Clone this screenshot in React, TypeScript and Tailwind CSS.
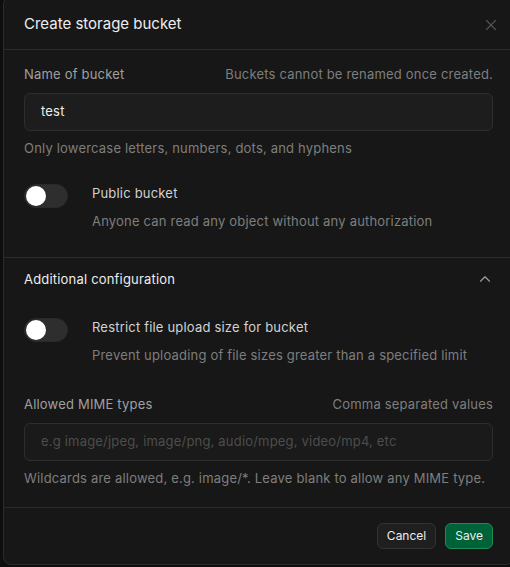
import React from "react";
import { ChevronUp, X } from "lucide-react";

function Switch() {
  return (
    <div className="relative h-[24px] w-[44px] shrink-0 rounded-full border border-[#2a2a2a] bg-[#2e2e2e]">
      <div className="absolute left-[1px] top-[1px] h-[20px] w-[20px] rounded-full bg-white" />
    </div>
  );
}

export default function App() {
  return (
    <div
      className="h-[567px] w-[510px] overflow-hidden bg-[#0e0e0e] tracking-[0.012em]"
      style={{ fontFamily: "Inter, 'Noto Sans', sans-serif" }}
    >
      <div className="-mt-[4px] ml-[3px] flex h-[569px] w-[511px] flex-col rounded-lg border border-[#2b2b2b] bg-[#171717]">
        {/* Header */}
        <div className="flex h-[53px] items-center justify-between border-b border-[#2b2b2b] pl-5 pr-[13px] pt-[3px]">
          <h2 className="text-[15px] tracking-normal text-[#ededed]">Create storage bucket</h2>
          <X size={18} strokeWidth={1.5} className="text-[#555555]" />
        </div>

        {/* Section 1 */}
        <div className="border-b border-[#2b2b2b] px-5 pb-[26px] pt-[14px]">
          <div className="flex items-center justify-between text-[13px] leading-5">
            <span className="text-[#a0a0a0]">Name of bucket</span>
            <span className="text-[#7e7e7e]">Buckets cannot be renamed once created.</span>
          </div>
          <div className="mt-[9px] flex h-[38px] items-center rounded-md border border-[#2e2e2e] bg-[#1d1d1d] px-4 text-[13px] text-[#ededed]">
            test
          </div>
          <p className="mt-[7px] text-[13px] leading-5 text-[#7e7e7e]">
            Only lowercase letters, numbers, dots, and hyphens
          </p>
          <div className="mt-[26px] flex gap-6">
            <Switch />
            <div className="-mt-[1px]">
              <div className="text-[13px] leading-5 text-[#d2d2d2]">Public bucket</div>
              <div className="mt-2 text-[13px] leading-5 text-[#7e7e7e]">
                Anyone can read any object without any authorization
              </div>
            </div>
          </div>
        </div>

        {/* Section 2 */}
        <div className="border-b border-[#2b2b2b] px-5 pb-[19px] pt-[11px]">
          <div className="flex items-center justify-between">
            <span className="text-[13px] leading-5 text-[#ededed]">Additional configuration</span>
            <ChevronUp size={18} strokeWidth={1.5} className="mr-[-1px] text-[#a0a0a0]" />
          </div>
          <div className="mt-[29px] flex gap-6">
            <Switch />
            <div className="-mt-[1px]">
              <div className="text-[13px] leading-5 text-[#d2d2d2]">
                Restrict file upload size for bucket
              </div>
              <div className="mt-2 text-[13px] leading-5 text-[#7e7e7e]">
                Prevent uploading of file sizes greater than a specified limit
              </div>
            </div>
          </div>
          <div className="mt-[29px] flex items-center justify-between text-[13px] leading-5">
            <span className="text-[#a0a0a0]">Allowed MIME types</span>
            <span className="text-[#7e7e7e]">Comma separated values</span>
          </div>
          <div className="mt-[9px] flex h-[38px] items-center rounded-md border border-[#2e2e2e] bg-[#1a1a1a] px-4 text-[13px] text-[#4d4d4d]">
            e.g image/jpeg, image/png, audio/mpeg, video/mp4, etc
          </div>
          <p className="mt-[7px] text-[13px] leading-5 text-[#7e7e7e]">
            Wildcards are allowed, e.g. image/*. Leave blank to allow any MIME type.
          </p>
        </div>

        {/* Footer */}
        <div className="flex flex-1 items-center justify-end gap-[9px] px-5">
          <button className="h-[26px] rounded-md border border-[#333333] bg-[#1f1f1f] px-[9px] text-[12px] tracking-normal text-[#ededed]">
            Cancel
          </button>
          <button className="h-[26px] rounded-md border border-[#1d8a57] bg-[#006239] px-[9px] text-[12px] tracking-normal text-[#ededed]">
            Save
          </button>
        </div>
      </div>
    </div>
  );
}
